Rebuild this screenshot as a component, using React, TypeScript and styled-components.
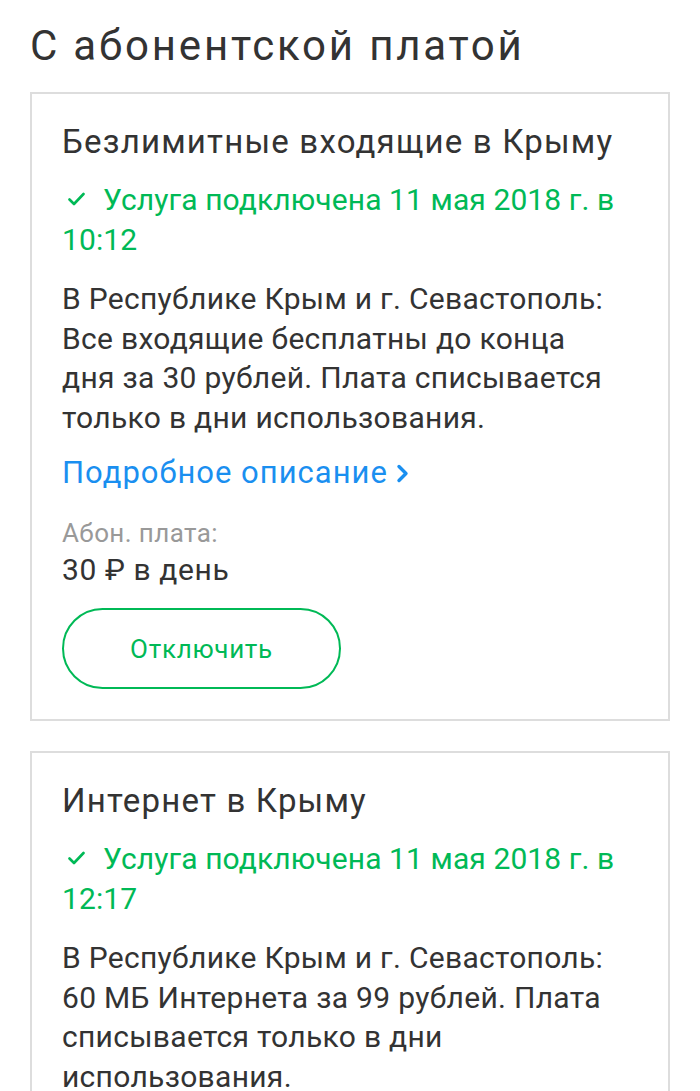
import React from 'react'
import styled, { createGlobalStyle } from 'styled-components'

const GlobalStyle = createGlobalStyle`
  html, body {
    margin: 0;
    padding: 0;
    background: #ffffff;
  }
  body {
    font-family: Roboto, 'Noto Sans', 'Liberation Sans', sans-serif;
    color: #333333;
    -webkit-font-smoothing: antialiased;
  }
`

const Page = styled.div`
  padding: 18px 30px 30px 30px;
  display: flex;
  flex-direction: column;
  gap: 30px;
`

const SectionTitle = styled.h1`
  margin: 0 0 -12px 0;
  font-size: 42px;
  font-weight: 400;
  line-height: 56px;
  letter-spacing: 2.8px;
  color: #333333;
`

const Card = styled.section`
  border: 2px solid #dddddd;
  padding: 26px 30px 30px 30px;
  display: flex;
  flex-direction: column;
`

const CardTitle = styled.h2`
  margin: 0;
  font-size: 33px;
  font-weight: 400;
  line-height: 44px;
  letter-spacing: 1.2px;
  color: #333333;
`

const Status = styled.div`
  margin-top: 16px;
  font-size: 30px;
  line-height: 40px;
  letter-spacing: 0.1px;
  color: #00b956;
`

const Check = styled.svg`
  width: 17px;
  height: 14px;
  margin: 0 18px 0 6px;
  vertical-align: 4px;
`

/* line breaks follow the original layout */
const Description = styled.p`
  margin: 19px 0 0 0;
  font-size: 30px;
  line-height: 39.5px;
  letter-spacing: 0.3px;
  white-space: pre-line;
  color: #333333;
`

const MoreLink = styled.a`
  margin-top: 16px;
  display: inline-flex;
  align-items: center;
  gap: 8px;
  font-size: 31px;
  line-height: 40px;
  letter-spacing: 1px;
  color: #1a8ff0;
  text-decoration: none;
`

const Chevron = styled.svg`
  width: 13px;
  height: 19px;
`

const PriceLabel = styled.div`
  margin-top: 24px;
  font-size: 26px;
  line-height: 32px;
  letter-spacing: 0.4px;
  color: #999999;
`

const PriceValue = styled.div`
  margin-top: 3px;
  font-size: 30px;
  line-height: 36px;
  letter-spacing: 0.6px;
  color: #333333;
`

const OutlineButton = styled.button`
  margin-top: 20px;
  width: 279px;
  height: 81px;
  border: 2px solid #00b956;
  border-radius: 41px;
  background: #ffffff;
  color: #00b956;
  font-family: inherit;
  font-size: 26px;
  letter-spacing: 0.7px;
  cursor: pointer;
  align-self: flex-start;
`

type Service = {
  title: string
  connected: string
  description: string
  price?: string
}

const services: Service[] = [
  {
    title: 'Безлимитные входящие в Крыму',
    connected: 'Услуга подключена 11 мая 2018 г. в 10:12',
    description:
      'В Республике Крым и г. Севастополь:\nВсе входящие бесплатны до конца\nдня за 30 рублей. Плата списывается\nтолько в дни использования.',
    price: '30 ₽ в день',
  },
  {
    title: 'Интернет в Крыму',
    connected: 'Услуга подключена 11 мая 2018 г. в 12:17',
    description:
      'В Республике Крым и г. Севастополь:\n60 МБ Интернета за 99 рублей. Плата\nсписывается только в дни\nиспользования.',
    price: '99 ₽ в день',
  },
]

const ServiceCard: React.FC<{ service: Service }> = ({ service }) => (
  <Card>
    <CardTitle>{service.title}</CardTitle>
    <Status>
      <Check viewBox="0 0 17 14">
        <path d="M1.5 7.5 L6 12 L15.5 2" fill="none" stroke="#00b956" strokeWidth="2.6" strokeLinecap="round" strokeLinejoin="round" />
      </Check>
      {service.connected}
    </Status>
    <Description>{service.description}</Description>
    <div>
      <MoreLink href="#">
        Подробное описание
        <Chevron viewBox="0 0 13 19">
          <path d="M3 2.5 L10 9.5 L3 16.5" fill="none" stroke="#1a8ff0" strokeWidth="3.4" strokeLinecap="round" strokeLinejoin="round" />
        </Chevron>
      </MoreLink>
    </div>
    {service.price && (
      <>
        <PriceLabel>Абон. плата:</PriceLabel>
        <PriceValue>{service.price}</PriceValue>
        <OutlineButton>Отключить</OutlineButton>
      </>
    )}
  </Card>
)

export default function App() {
  return (
    <>
      <GlobalStyle />
      <Page>
        <SectionTitle>С абонентской платой</SectionTitle>
        {services.map((s) => (
          <ServiceCard key={s.title} service={s} />
        ))}
      </Page>
    </>
  )
}
